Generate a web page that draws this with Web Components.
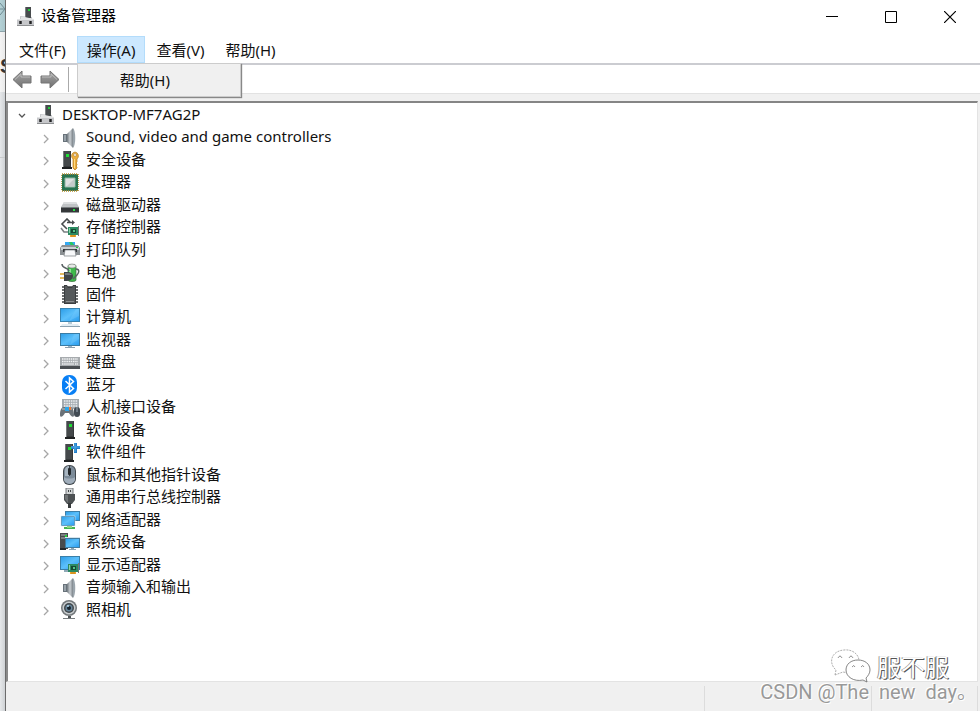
<!DOCTYPE html>
<html lang="zh-CN">
<head>
<meta charset="utf-8">
<title>设备管理器</title>
<style>
  body {
    margin: 0;
    height: 100vh;
    overflow: hidden;
    font-family: "Noto Sans", "Noto Sans CJK SC", sans-serif;
    font-size: 15px;
    color: #111;
    background: #e3e5e8;
  }
</style>
</head>
<body>
<desktop-view>
  <app-window>
    <title-bar slot="title">设备管理器</title-bar>
    <menu-bar slot="menu">
      <menu-entry>文件(F)</menu-entry>
      <menu-entry open>操作(A)<button slot="items" role="menuitem">帮助(H)</button></menu-entry>
      <menu-entry>查看(V)</menu-entry>
      <menu-entry>帮助(H)</menu-entry>
    </menu-bar>
    <tool-bar slot="tools"></tool-bar>
    <device-tree></device-tree>
    <status-bar slot="status"></status-bar>
  </app-window>
  <water-mark slot="mark">
    服不服
    <span slot="author">CSDN @The&nbsp; new&nbsp; day。</span>
  </water-mark>
</desktop-view>

<script>
const SCREEN = `<linearGradient id="s" x2="1" y2="1"><stop stop-color="#2f9fe8"/><stop offset=".5" stop-color="#5cc0fb"/><stop offset="1" stop-color="#2a9df0"/></linearGradient>`;
const METAL = `<linearGradient id="m"><stop stop-color="#6d757b"/><stop offset=".5" stop-color="#c9ced2"/><stop offset="1" stop-color="#7b8389"/></linearGradient>`;
const SPEAKER = `${METAL}<path d="M3 6h5v8H3z" fill="#68727a"/><path d="M7 6l6-6v20l-6-6z" fill="url(#m)"/><path d="M13 0c3 3 3 17 0 20z" fill="#9ba5ac"/><path d="M4 7h2v6H4z" fill="#98a2a9"/>`;
const TOWER = (x, y) => `<g transform="translate(${x} ${y})"><path d="M1 0h8v16H1z" fill="#36393b"/><path d="M2 0h6v15H2z" fill="#45494b"/><path d="M0 16h10v2H0z" fill="#1f2122"/><path d="M1 0h1v16H1z" fill="#777b7d"/><path d="M4 3h3v3H4z" fill="#1fdc35"/></g>`;
const CARD = (x, y) => `<g transform="translate(${x} ${y})"><path d="M0 1h10v8H0z" fill="#2c8a61"/><path d="M10 0h1v10h-1z" fill="#777"/><path d="M3 3h5v4H3z" fill="#164a35"/><path d="M5 4h2v2H5z" fill="#55c58a"/><path d="M1 2h1v5H1z" fill="#8bd0a9"/><path d="M2 9h6v2H2z" fill="#eea42a"/><path d="M4 9v2M6 9v2" stroke="#a86b12" stroke-width=".6"/></g>`;

const ICONS = {
  pc: `<path d="M9 0h6v11H9z" fill="#484c4e"/><path d="M9 0h1v11H9z" fill="#7d8183"/><path d="M12 2h2v2h-2z" fill="#20d23a"/><path d="M4 9h5v2h6v-1h1v2h2v7H1v-7h3z" fill="#c6c7ca"/><path d="M4 9h5v1H5v2H1v1h17v-1" fill="#e3e4e5"/><path d="M3 14h3v3H3zM13 14h3v3h-3z" fill="#4b4d50"/><path d="M4 14h1v3H4zM14 14h1v3h-1z" fill="#222"/><path d="M1 18h17v1H1z" fill="#8e9092"/>`,
  sound: SPEAKER,
  security: `${TOWER(2, 1)}<path d="M15 2a4 4 0 0 0-2 7v9l2 2 2-2v-1l-1-1 1-1v-1l-1-1 1-1V9a4 4 0 0 0-2-7z" fill="#edaf3f" stroke="#b57819" stroke-width=".7"/><circle cx="15" cy="5" r="1.4" fill="#fff" stroke="#9e6815" stroke-width=".5"/><path d="M14.5 9v9" stroke="#ffdb85"/>`,
  cpu: `<path d="M2 1h16v17H2z" fill="#39705a"/><path d="M2 1h16v17H2z" fill="none" stroke="#b3902d" stroke-width="1.6" stroke-dasharray="1 1"/><path d="M2 2h16v15H2z" fill="#287450"/><path d="M5 5h10v9H5z" fill="#dfe2e1" stroke="#8fb6a2"/><path d="M14 6v7H7z" fill="#c5cbca"/>`,
  disk: `<path d="M4 7h12l3 5H1z" fill="#c1c4c6"/><path d="M4 7h12l1 2H3z" fill="#dcdedf"/><path d="M1 12h18v5H1z" fill="#35383a"/><path d="M1 12h18v1H1z" fill="#777b7d"/><path d="M13 14h2v2h-2z" fill="#29df46"/><path d="M1 17h18v1H1z" fill="#989b9d"/>`,
  storage: `<path d="M10 4L7 1 2 6l5 5M7 4.500h5" fill="none" stroke="#474b4d" stroke-width="1.600"/><path d="M12 2l3 2.500L12 7z" fill="#474b4d"/><path d="M1 10l3 4h4" fill="none" stroke="#7b8082" stroke-width="1.600"/>${CARD(8, 8)}`,
  printer: `<path d="M5 2h10v5H5z" fill="#35a9f3"/><path d="M9 2h3l3 4h-4z" fill="#2bc55e"/><path d="M2 5h16l2 3v7H0V8z" fill="#8b9093"/><path d="M1 7h18v3H1z" fill="#cbd0d3"/><path d="M3 9h14v3H3z" fill="#34383b"/><path d="M5 10h10l1 6H4z" fill="#f8f9fa" stroke="#787e82" stroke-width=".7"/><path d="M16 7h2v1h-2z" fill="#1fce3f"/>`,
  battery: `<path d="M8 3c0-2 8-2 8 0v14c0 2-8 2-8 0z" fill="#3fb94b" stroke="#39693c" stroke-width=".7"/><ellipse cx="12" cy="3" rx="4" ry="2" fill="#e5e9e6" stroke="#777" stroke-width=".6"/><path d="M10 6v10" stroke="#a7efaa" stroke-width="1.5"/><path d="M2 1c0 5 6 3 7 7M16 6c4 0 3 4 1 6l-4 4" fill="none" stroke="#596062" stroke-width="1.5"/><path d="M0 11h4M0 15h4" stroke="#dda62c" stroke-width="1.6"/><path d="M4 9h3c4 0 6 2 6 4s-2 5-6 5H4z" fill="#404547"/><path d="M5 10h3c2 0 3 1 4 2H5z" fill="#73797b"/>`,
  firmware: `<path d="M2 2h16M2 5h16M2 8h16M2 11h16M2 14h16M2 17h16" stroke="#3c4042" stroke-width="1.3"/><path d="M4 0h3l1 2h4l1-2h3v19H4z" fill="#3a3d3f"/><path d="M5 1h2l1 2h4l1-2h2v17H5z" fill="#55595b"/><path d="M6 16h8v1H6z" fill="#8a8d8f"/>`,
  computer: `${SCREEN}<path d="M0 0h20v14H0z" fill="#3784b3"/><path d="M1 1h18v12H1z" fill="url(#s)"/><path d="M19 1v7L9 13 16 1z" fill="#86d2ff" opacity=".3"/><path d="M8 14h4v2H8z" fill="#b9cbd6"/><path d="M2 16h16l2 3H0z" fill="#e1edf4"/><path d="M0 18h20v1H0z" fill="#8ba2b1"/>`,
  monitor: `${SCREEN}<path d="M0 3h20v13H0z" fill="#397ca5"/><path d="M1 4h18v11H1z" fill="url(#s)"/><path d="M14 4h5v5l-9 6z" fill="#86d2ff" opacity=".3"/><path d="M8 16h4v1H8z" fill="#9cb4c4"/><path d="M5 17h10v1H5z" fill="#8b9eab"/>`,
  keyboard: `<path d="M0 4h20v10H0z" fill="#a7abae"/><path d="M2 6h16M2 8.5h16M2 11h3M15 11h3" stroke="#f2f4f5" stroke-width="1.4" stroke-dasharray="1.5 .7"/><path d="M5 11h9" stroke="#e5e7e8" stroke-width="1.3"/><path d="M0 13h20v3H0z" fill="#4b4f53"/>`,
  bluetooth: `<rect x="2" width="15" height="20" rx="7" fill="#087ff5"/><path d="M5.5 6l8 7.5L9.500 17V3l4 3.500-8 7.500" fill="none" stroke="#fff" stroke-width="1.5"/>`,
  hid: `<path d="M2 1h17v10H2z" fill="#a4abb0"/><path d="M4 3h14M4 5.5h14M4 8h14" stroke="#edf0f2" stroke-width="1.3" stroke-dasharray="1.5 .8"/><path d="M0 17c0-4 1-8 4-8h6c3 0 4 4 4 8 0 3-3 2-5-2H5c-2 4-5 5-5 2z" fill="#6a7278"/><path d="M2 10h10v2H2z" fill="#959da1"/><path d="M5 9h4v4H5z" fill="#2ea5e8"/><path d="M9 9h2v3H9z" fill="#f37a31"/><rect x="14" y="9" width="6" height="10" rx="3" fill="#424b53"/><path d="M17 9v5" stroke="#9aabb8"/>`,
  software: TOWER(5, 1),
  component: `${TOWER(4, 1)}<path d="M14 0h3v3h3v3h-3v4h-3V6h-3V3h3z" fill="#247fca"/><path d="M15 0v9M11 4h9" stroke="#53abe4"/>`,
  mouse: `<rect x="3" y="0" width="13" height="20" rx="6" fill="#42484d"/><rect x="4" y="1" width="11" height="18" rx="5" fill="#7c8b99"/><path d="M5 6c0-5 4-5 4-5v10H5z" fill="#a8b5c0"/><path d="M4 12c2 2 9 2 11 0v3c-2 5-9 5-11 0z" fill="#a0adba"/><path d="M9.5 1v10" stroke="#394148"/><rect x="8" y="3" width="3" height="7" rx="1" fill="#24292d"/>`,
  usb: `<path d="M6 0h7v7H6z" fill="#d2d5d6" stroke="#777b7e"/><path d="M8 2h1v2H8zM10 2h1v2h-1z" fill="#44484a"/><path d="M4 6h11v6l-3 4H7l-3-4z" fill="#4d5153"/><path d="M5 7h3v8l-3-4z" fill="#707476"/><path d="M8 15h3v5H8z" fill="#363a3c"/>`,
  network: `${SCREEN}<path d="M5 1h15v10H5z" fill="#3e7fa7"/><path d="M6 2h13v8H6z" fill="url(#s)"/><path d="M1 6h14v10H1z" fill="#377ba8" stroke="#d4edf8" stroke-width=".6"/><path d="M2 7h12v8H2z" fill="url(#s)"/><path d="M4 17h11v2H4z" fill="#45b552"/><path d="M7 16h5v2H7z" fill="#8fd783"/>`,
  system: `${SCREEN}<path d="M0 0h8v16H0z" fill="#484c4e"/><path d="M1 2h6M1 5h6" stroke="#aeb2b4"/><path d="M5 2h2v2H5z" fill="#24d43b"/><path d="M0 15h6v2H0z" fill="#24282b"/><path d="M5 4h15v11H5z" fill="#d4e4ed"/><path d="M5 5h15v10H5z" fill="#417ca0"/><path d="M6 6h13v8H6z" fill="url(#s)"/><path d="M11 15h3v1h-3zM9 16h7v1H9z" fill="#8fa5b3"/>`,
  display: `${SCREEN}<path d="M0 1h20v14H0z" fill="#3a7fa8"/><path d="M1 2h18v12H1z" fill="url(#s)"/><path d="M4 15h4v2H4z" fill="#90a9b7"/>${CARD(8, 8)}`,
  audio: SPEAKER,
  camera: `<circle cx="9" cy="8" r="8" fill="#72777a"/><circle cx="9" cy="8" r="6.5" fill="#c8cdcf"/><circle cx="9" cy="8" r="5" fill="#42484c"/><circle cx="9" cy="8" r="3.5" fill="#648398"/><circle cx="9" cy="8" r="2" fill="#17222b"/><circle cx="8" cy="6" r="1" fill="#b5d9ec"/><path d="M8 16h3v2H8z" fill="#4c5154"/><path d="M3 18h12v1H3z" fill="#777c7e"/>`,
};

const DEVICES = [
  ["sound", "Sound, video and game controllers"],
  ["security", "安全设备"],
  ["cpu", "处理器"],
  ["disk", "磁盘驱动器"],
  ["storage", "存储控制器"],
  ["printer", "打印队列"],
  ["battery", "电池"],
  ["firmware", "固件"],
  ["computer", "计算机"],
  ["monitor", "监视器"],
  ["keyboard", "键盘"],
  ["bluetooth", "蓝牙"],
  ["hid", "人机接口设备"],
  ["software", "软件设备"],
  ["component", "软件组件"],
  ["mouse", "鼠标和其他指针设备"],
  ["usb", "通用串行总线控制器"],
  ["network", "网络适配器"],
  ["system", "系统设备"],
  ["display", "显示适配器"],
  ["audio", "音频输入和输出"],
  ["camera", "照相机"],
];

class BaseElement extends HTMLElement {
  constructor() {
    super();
    this.attachShadow({ mode: "open" });
  }

  connectedCallback() {
    this.render();
  }

  render() {
    this.shadowRoot.innerHTML = this.template();
  }
}

class DesktopView extends BaseElement {
  template() {
    return `
      <style>
        :host {
          display: grid;
          grid-template-columns: 5px minmax(0, 1fr);
          height: 100%;
          position: relative;
        }
        .behind {
          display: grid;
          grid-template-rows: 32px 60px 66px 1fr;
          overflow: hidden;
          background: linear-gradient(90deg, #e6e8ea, #cfd2d5);
        }
        .top {
          background: linear-gradient(90deg, #b4d1d6, #97b3b8);
          border-bottom: 1px solid #8da4aa;
        }
        .word {
          display: flex;
          justify-content: flex-end;
          align-items: center;
          padding-top: 8px;
          background: linear-gradient(90deg, #f4f4f4, #d8d8d8);
          font: bold 20px "Liberation Sans", sans-serif;
          color: #333;
        }
        .line { border-bottom: 1px solid #c8cacc; }
      </style>
      <div class="behind" aria-hidden="true">
        <div class="top"><svg width="5" height="14" viewBox="0 0 5 14"><path d="M0 1l5 6-5 6M0 7h5" fill="none" stroke="#6e8b93"/></svg></div>
        <div class="word">S</div>
        <div class="line"></div>
      </div>
      <slot></slot>
      <slot name="mark"></slot>
    `;
  }
}

class AppWindow extends BaseElement {
  template() {
    return `
      <style>
        :host {
          display: flex;
          flex-direction: column;
          min-width: 0;
          border-left: 1px solid #6c6c6c;
          background: #f0f0f0;
        }
        main {
          flex: 1;
          min-height: 0;
          margin: 7px 2px 0 0;
          border: 2px solid #858585;
          border-right: 1px solid #e3e3e3;
          border-bottom: 1px solid #e3e3e3;
          border-left-color: #8a8a8a;
          background: #fff;
          overflow: hidden;
        }
      </style>
      <slot name="title"></slot>
      <slot name="menu"></slot>
      <slot name="tools"></slot>
      <main><slot></slot></main>
      <slot name="status"></slot>
    `;
  }
}

class TitleBar extends BaseElement {
  template() {
    return `
      <style>
        :host {
          display: flex;
          align-items: center;
          height: 34px;
          padding: 0 1px 0 10px;
          background: #fff;
          color: #000;
        }
        h1 {
          flex: 1;
          align-self: flex-start;
          margin: 0 0 0 5px;
          font-size: 15px;
          font-weight: 400;
          line-height: 30px;
        }
        button {
          width: 59px;
          height: 34px;
          padding: 0;
          border: 0;
          background: none;
        }
        svg { display: block; margin: auto; }
      </style>
      <device-icon name="pc"></device-icon>
      <h1><slot></slot></h1>
      <button aria-label="最小化"><svg width="12" height="12"><path d="M0 5h12v1H0z"/></svg></button>
      <button aria-label="最大化"><svg width="12" height="12"><path d="M.5.5h11v11H.5z" fill="none" stroke="#000"/></svg></button>
      <button aria-label="关闭"><svg width="12" height="12"><path d="M0 0l12 12M12 0L0 12" stroke="#000" stroke-width="1.2"/></svg></button>
    `;
  }
}

class MenuBar extends BaseElement {
  template() {
    return `
      <style>
        :host { display: block; background: #fff; }
        nav {
          display: flex;
          gap: 1px;
          padding: 2px 0 0 3px;
          border-bottom: 2px solid #cbccd1;
        }
      </style>
      <nav role="menubar"><slot></slot></nav>
    `;
  }
}

class MenuEntry extends BaseElement {
  template() {
    return `
      <style>
        :host { display: block; position: relative; }
        button, ::slotted(button) {
          font: inherit;
          color: inherit;
          border: 0;
          background: none;
          line-height: 20px;
        }
        button {
          display: block;
          height: 27px;
          padding: 0 10px;
        }
        :host([open]) button {
          background: #cce8ff;
          box-shadow: inset 0 0 0 1px #b3dcfb;
        }
        .popup {
          display: none;
          position: absolute;
          top: 100%;
          left: 0;
          z-index: 2;
          width: 164px;
          box-sizing: border-box;
          border: 1px solid #ccc;
          background: #f0f0f0;
          box-shadow: 1px 1px 1px #888;
        }
        :host([open]) .popup { display: block; }
        ::slotted(button) {
          width: 100%;
          height: 32px;
          padding: 0 0 0 42px;
          text-align: left;
        }
      </style>
      <button role="menuitem" aria-haspopup="true"><slot></slot></button>
      <div class="popup" role="menu"><slot name="items"></slot></div>
    `;
  }
}

class ToolBar extends BaseElement {
  template() {
    const arrow = `<linearGradient id="a" x2="0" y2="1"><stop stop-color="#a8a8a8"/><stop offset="1" stop-color="#707070"/></linearGradient><path d="M1 9.500L10 1v5h9v7h-9v5z" fill="url(#a)" stroke="#757575"/><path d="M3 9.500L9 4v3h9" fill="none" stroke="#bbb"/>`;
    return `
      <style>
        :host {
          display: flex;
          gap: 8px;
          height: 27px;
          padding: 1px 0 0 6px;
          border-bottom: 1px solid #e2e2e2;
          background: #fff;
        }
        button {
          display: flex;
          align-items: center;
          width: 20px;
          padding: 0;
          border: 0;
          background: none;
        }
        .next svg { transform: scaleX(-1); }
        i { width: 1px; margin: 1px 0; background: #aaa; }
      </style>
      <button aria-label="后退"><svg width="20" height="19">${arrow}</svg></button>
      <button class="next" aria-label="前进"><svg width="20" height="19">${arrow}</svg></button>
      <i></i>
    `;
  }
}

class DeviceIcon extends BaseElement {
  template() {
    return `
      <style>
        :host { display: block; width: 20px; height: 20px; }
        svg { display: block; }
      </style>
      <svg width="20" height="20" viewBox="0 0 20 20" aria-hidden="true">${ICONS[this.getAttribute("name")]}</svg>
    `;
  }
}

class DeviceRow extends BaseElement {
  template() {
    const open = this.hasAttribute("open");
    const chevron = open ? "M7 9l3 3 3-3" : "M8 7l4 4-4 4";
    return `
      <style>
        :host {
          display: flex;
          align-items: center;
          padding-left: 28px;
          white-space: nowrap;
        }
        :host([open]) { padding-left: 4px; }
        button {
          width: 20px;
          height: 20px;
          margin-right: 4px;
          padding: 0;
          border: 0;
          background: none;
        }
        svg { display: block; }
        span {
          align-self: flex-start;
          margin-left: 6px;
          line-height: 21px;
        }
      </style>
      <button aria-label="${open ? "折叠" : "展开"}"><svg width="20" height="20"><path d="${chevron}" fill="none" stroke="${open ? "#555" : "#a6a6a6"}" stroke-width="1.3"/></svg></button>
      <device-icon name="${this.getAttribute("icon")}"></device-icon>
      <span><slot></slot></span>
    `;
  }
}

class DeviceTree extends BaseElement {
  template() {
    return `
      <style>
        :host { display: block; padding-top: 1px; }
        .tree { display: grid; grid-auto-rows: 22px 23px; }
      </style>
      <div class="tree" role="tree">
        <device-row role="treeitem" icon="pc" open>DESKTOP-MF7AG2P</device-row>
        ${DEVICES.map(([icon, label]) => `<device-row role="treeitem" icon="${icon}">${label}</device-row>`).join("")}
      </div>
    `;
  }
}

class StatusBar extends BaseElement {
  template() {
    return `
      <style>
        :host {
          display: grid;
          grid-template-columns: 1fr 167px 108px;
          height: 25px;
          padding-top: 4px;
          background: #f0f0f0;
        }
        div { border-right: 1px solid #dcdcdc; }
        div:last-child { margin-right: 2px; }
      </style>
      <div></div><div></div><div></div>
    `;
  }
}

class WaterMark extends BaseElement {
  template() {
    return `
      <style>
        :host {
          position: absolute;
          right: 3px;
          bottom: 11px;
          display: flex;
          flex-direction: column;
          align-items: flex-end;
          pointer-events: none;
        }
        .name {
          display: flex;
          align-items: center;
          gap: 6px;
          height: 36px;
          margin-right: 28px;
          font: 24px/36px "Noto Sans CJK SC", sans-serif;
          color: #fff;
          text-shadow: 1px 1px #555, -1px 0 #999;
        }
        .author {
          height: 16px;
          font: 20px/16px Roboto, "Noto Sans CJK SC", sans-serif;
          color: #999;
          text-shadow: 1px 1px #fff, -1px -1px #fff;
          white-space: nowrap;
        }
      </style>
      <div class="name">
        <svg width="40" height="34" viewBox="0 0 40 34" fill="#fff" stroke="#999" stroke-width=".8">
          <path d="M4 26l1-5C-3 14 0 2 13 1c9-1 16 5 15 13-1 7-8 11-16 9z" stroke-dasharray="2 1"/>
          <path d="M36 33l-4-2c-9 2-17-3-17-10 0-6 5-10 12-10s12 4 12 10c0 3-2 6-4 8z" stroke="#666"/>
          <path d="M7 9q2-4 4 0M18 9q2-4 4 0M21 18q2-3 3 0M30 18q2-3 3 0" fill="none" stroke="#777"/>
        </svg>
        <slot></slot>
      </div>
      <div class="author"><slot name="author"></slot></div>
    `;
  }
}

customElements.define("device-icon", DeviceIcon);
customElements.define("device-row", DeviceRow);
customElements.define("device-tree", DeviceTree);
customElements.define("title-bar", TitleBar);
customElements.define("menu-entry", MenuEntry);
customElements.define("menu-bar", MenuBar);
customElements.define("tool-bar", ToolBar);
customElements.define("status-bar", StatusBar);
customElements.define("app-window", AppWindow);
customElements.define("water-mark", WaterMark);
customElements.define("desktop-view", DesktopView);
</script>
</body>
</html>
